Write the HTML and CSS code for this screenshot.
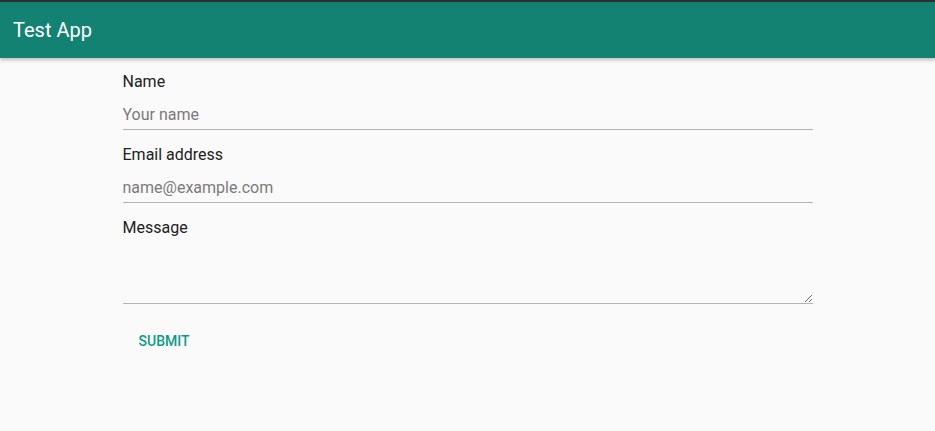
FILE: index.html
```html
<!DOCTYPE html>
<html>
<head>
<meta charset="utf-8">
<link rel="stylesheet" href="styles.css">
</head>
<body>
<header class="toolbar"><span class="title">Test App</span></header>
<main class="content">
  <form class="form">
    <label class="label" for="name">Name</label>
    <input class="field" id="name" type="text" placeholder="Your name">
    <label class="label" for="email">Email address</label>
    <input class="field" id="email" type="email" placeholder="name@example.com">
    <label class="label" for="msg">Message</label>
    <textarea class="area" id="msg"></textarea>
    <div class="actions"><button class="btn" type="button">Submit</button></div>
  </form>
</main>
</body>
</html>
```
FILE: styles.css
```css
html, body {
  margin: 0;
  padding: 0;
  background: #fafafa;
  font-family: Roboto, "Noto Sans", sans-serif;
  height: 100%;
}
.toolbar {
  box-sizing: border-box;
  height: 58px;
  border-top: 2px solid #2e2e2e;
  background: rgb(19, 130, 115);
  display: flex;
  align-items: center;
  padding: 0 13px;
  box-shadow: 0 2px 4px rgba(0,0,0,0.25);
  position: relative;
}
.title {
  color: #fff;
  font-size: 20px;
  font-weight: 400;
}
.content {
  display: flex;
  justify-content: center;
  padding-top: 12px;
}
.form {
  width: 690px;
  display: flex;
  flex-direction: column;
}
.label {
  display: block;
  font-size: 16px;
  line-height: 24px;
  color: #212121;
}
.field {
  box-sizing: border-box;
  height: 36px;
  padding: 6px 0 0 0;
  margin: 0 0 13px 0;
  border: none;
  border-bottom: 1px solid #b3b3b3;
  background: transparent;
  font-family: Roboto, sans-serif;
  font-size: 16px;
  color: #212121;
  outline: none;
}
.field::placeholder {
  color: #7a7a7a;
}
.area {
  box-sizing: border-box;
  height: 64px;
  border: none;
  border-bottom: 1px solid #b3b3b3;
  background: transparent;
  font-family: Roboto, sans-serif;
  font-size: 16px;
  margin: 0;
  padding: 0;
  outline: none;
}
.actions {
  margin-top: 19px;
}
.btn {
  height: 36px;
  padding: 0 16px;
  border: none;
  background: transparent;
  color: #0f9a88;
  font-family: Roboto, sans-serif;
  font-size: 14px;
  font-weight: 500;
  text-transform: uppercase;
  cursor: pointer;
}
```
